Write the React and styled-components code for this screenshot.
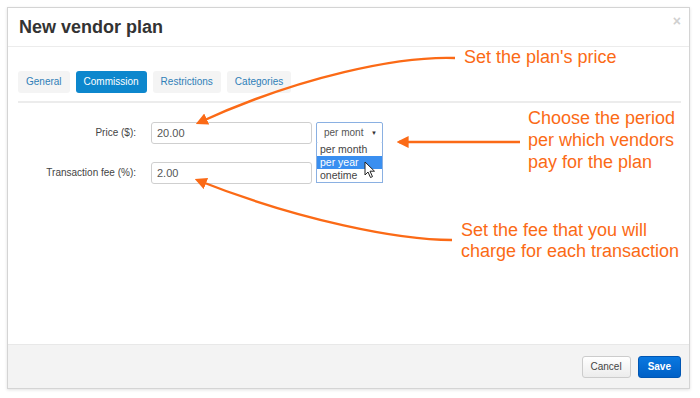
import React from 'react';
import styled, { createGlobalStyle } from 'styled-components';

const GlobalStyle = createGlobalStyle`
  html, body {
    margin: 0;
    padding: 0;
    background: #ffffff;
    font-family: "Liberation Sans", Arial, sans-serif;
  }
`;

const ORANGE = '#fb6a16';

const tabs = ['General', 'Commission', 'Restrictions', 'Categories'];
const periods = ['per month', 'per year', 'onetime'];

const App = () => (
  <Page>
    <GlobalStyle />
    <Modal>
      <Header>
        <Title>New vendor plan</Title>
        <Close>×</Close>
      </Header>
      <Body>
        <TabBar>
          {tabs.map((t) => (
            <Tab key={t} $active={t === 'Commission'}>{t}</Tab>
          ))}
        </TabBar>
        <Form>
          <Row>
            <Label>Price ($):</Label>
            <Input>20.00</Input>
            <SelectWrap>
              <Select>
                per mont
                <Caret>▼</Caret>
              </Select>
              <Options>
                {periods.map((p) => (
                  <Option key={p} $selected={p === 'per year'}>{p}</Option>
                ))}
              </Options>
              <Cursor viewBox="0 0 12 18" width="12" height="18">
                <path d="M1 1 L1 14 L4 11 L6.5 16.5 L8.5 15.6 L6 10.2 L10.5 10.2 Z" fill="#fff" stroke="#222" strokeWidth="1" strokeLinejoin="round" />
              </Cursor>
            </SelectWrap>
          </Row>
          <Row>
            <Label>Transaction fee (%):</Label>
            <Input>2.00</Input>
          </Row>
        </Form>
      </Body>
      <Footer>
        <Button>Cancel</Button>
        <Button $primary>Save</Button>
      </Footer>
    </Modal>

    <Arrows viewBox="0 0 700 398" width="700" height="398">
      <defs>
        <marker id="head" viewBox="0 0 10 10" refX="8" refY="5" markerWidth="5" markerHeight="5" orient="auto-start-reverse">
          <path d="M0 0 L10 5 L0 10 Z" fill={ORANGE} />
        </marker>
      </defs>
      <path d="M455 58 C400 56 300 76 198 123" stroke={ORANGE} strokeWidth="2.4" fill="none" markerEnd="url(#head)" />
      <path d="M520 142 L399 142" stroke={ORANGE} strokeWidth="2.4" fill="none" markerEnd="url(#head)" />
      <path d="M452 240 C400 240 300 221 197 180" stroke={ORANGE} strokeWidth="2.4" fill="none" markerEnd="url(#head)" />
    </Arrows>

    <Note $x={464} $y={47} $size={18}>Set the plan's price</Note>
    <Note $x={528} $y={107} $size={18} $line={22}>
      Choose the period<br />per which vendors<br />pay for the plan
    </Note>
    <Note $x={461} $y={220} $size={18} $line={21}>
      Set the fee that you will<br />charge for each transaction
    </Note>
  </Page>
);

const Page = styled.div`
  position: relative;
  width: 700px;
  height: 398px;
  padding: 7px 0 0 7px;
  box-sizing: border-box;
  overflow: hidden;
`;

const Modal = styled.div`
  width: 683px;
  height: 382px;
  box-sizing: border-box;
  border: 1px solid #d4d4d4;
  box-shadow: 0 1px 3px rgba(0, 0, 0, 0.12);
  background: #fff;
  display: flex;
  flex-direction: column;
`;

const Header = styled.div`
  height: 38px;
  flex-shrink: 0;
  border-bottom: 1px solid #ececec;
  display: flex;
  align-items: center;
  justify-content: space-between;
  padding: 0 8px 0 11px;
`;

const Title = styled.h3`
  margin: 0;
  font-size: 18px;
  font-weight: bold;
  color: #333;
`;

const Close = styled.span`
  font-size: 14px;
  font-weight: bold;
  color: #d0d0d0;
  align-self: flex-start;
  margin-top: 5px;
`;

const Body = styled.div`
  flex: 1;
  padding: 24px 8px 0 10px;
`;

const TabBar = styled.div`
  display: flex;
  gap: 6px;
  padding-bottom: 8px;
  border-bottom: 2px solid #ececec;
`;

const Tab = styled.div`
  height: 22px;
  line-height: 22px;
  padding: 0 8px;
  border-radius: 3px;
  font-size: 10px;
  background: ${(p) => (p.$active ? '#0d87cd' : '#f4f4f4')};
  color: ${(p) => (p.$active ? '#fff' : '#2f7fb8')};
`;

const Form = styled.div`
  display: flex;
  flex-direction: column;
  gap: 18px;
  padding-top: 19px;
`;

const Row = styled.div`
  display: flex;
  align-items: flex-start;
`;

const Label = styled.div`
  width: 118px;
  margin-right: 15px;
  text-align: right;
  font-size: 10px;
  color: #444;
  line-height: 22px;
`;

const Input = styled.div`
  width: 161px;
  height: 22px;
  box-sizing: border-box;
  border: 1px solid #cfcfcf;
  border-radius: 3px;
  padding: 0 5px;
  font-size: 11px;
  line-height: 20px;
  color: #555;
`;

const SelectWrap = styled.div`
  position: relative;
  margin-left: 4px;
  width: 67px;
`;

const Select = styled.div`
  height: 22px;
  box-sizing: border-box;
  border: 1px solid #8ab0e2;
  border-radius: 2px;
  padding: 0 5px 0 7px;
  font-size: 10px;
  line-height: 20px;
  color: #555;
  display: flex;
  justify-content: space-between;
`;

const Caret = styled.span`
  font-size: 6px;
  color: #333;
`;

const Options = styled.div`
  position: absolute;
  top: 21px;
  left: 0;
  width: 67px;
  box-sizing: border-box;
  border: 1px solid #8ab0e2;
  border-top: none;
  background: #fff;
`;

const Option = styled.div`
  height: 13px;
  line-height: 13px;
  padding-left: 3px;
  font-size: 10.5px;
  background: ${(p) => (p.$selected ? '#3a8ff0' : 'transparent')};
  color: ${(p) => (p.$selected ? '#fff' : '#444')};
`;

const Cursor = styled.svg`
  position: absolute;
  left: 48px;
  top: 39px;
`;

const Footer = styled.div`
  height: 43px;
  flex-shrink: 0;
  border-top: 1px solid #e8e8e8;
  background: #f3f3f3;
  display: flex;
  align-items: center;
  justify-content: flex-end;
  gap: 7px;
  padding: 0 8px 0 0;
`;

const Button = styled.div`
  height: 22px;
  box-sizing: border-box;
  line-height: 20px;
  padding: 0 ${(p) => (p.$primary ? 9 : 8)}px;
  border-radius: 3px;
  font-size: 10px;
  font-weight: ${(p) => (p.$primary ? 'bold' : 'normal')};
  color: ${(p) => (p.$primary ? '#fff' : '#444')};
  border: 1px solid ${(p) => (p.$primary ? '#0056b3' : '#cccccc')};
  background: ${(p) =>
    p.$primary
      ? 'linear-gradient(#0a78e0, #0060c6)'
      : 'linear-gradient(#ffffff, #ececec)'};
`;

const Arrows = styled.svg`
  position: absolute;
  left: 0;
  top: 0;
  pointer-events: none;
`;

const Note = styled.div`
  position: absolute;
  left: ${(p) => p.$x}px;
  top: ${(p) => p.$y}px;
  font-size: ${(p) => p.$size}px;
  line-height: ${(p) => (p.$line ? `${p.$line}px` : '1.2')};
  color: ${ORANGE};
  white-space: nowrap;
`;

export default App;
